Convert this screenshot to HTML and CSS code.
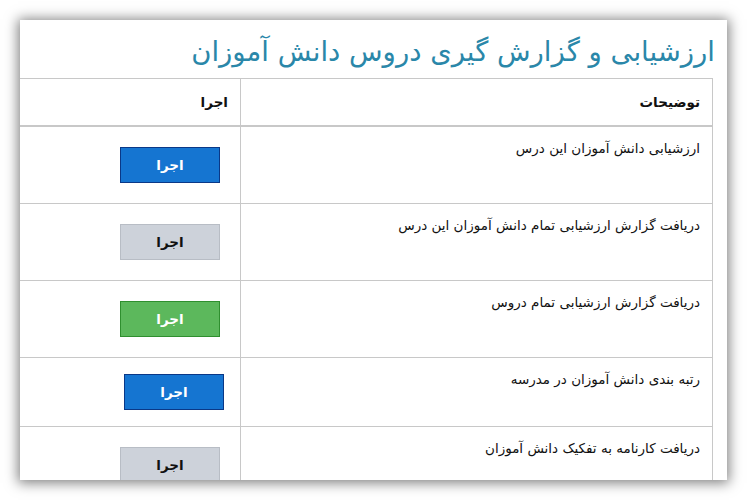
FILE: index.html
```html
<!DOCTYPE html>
<html lang="fa" dir="rtl">
  <head>
    <meta charset="UTF-8" />
    <meta name="viewport" content="width=device-width, initial-scale=1.0" />
    <title>ارزشیابی و گزارش گیری دروس دانش آموزان</title>
    <link rel="stylesheet" href="styles.css">
  </head>
  <body>
    <div class="panel">
      <h1 class="panel-title">ارزشیابی و گزارش گیری دروس دانش آموزان</h1>

      <table class="report-table">
        <thead>
          <tr>
            <th class="col-desc">توضیحات</th>
            <th class="col-action">اجرا</th>
          </tr>
        </thead>
        <tbody>
          <tr>
            <td class="col-desc">ارزشیابی دانش آموزان این درس</td>
            <td class="col-action"><button type="button" class="btn btn-primary">اجرا</button></td>
          </tr>
          <tr>
            <td class="col-desc">دریافت گزارش ارزشیابی تمام دانش آموزان این درس</td>
            <td class="col-action"><button type="button" class="btn btn-default">اجرا</button></td>
          </tr>
          <tr>
            <td class="col-desc">دریافت گزارش ارزشیابی تمام دروس</td>
            <td class="col-action"><button type="button" class="btn btn-success">اجرا</button></td>
          </tr>
          <tr class="row-compact">
            <td class="col-desc">رتبه بندی دانش آموزان در مدرسه</td>
            <td class="col-action"><button type="button" class="btn btn-primary">اجرا</button></td>
          </tr>
          <tr>
            <td class="col-desc">دریافت کارنامه به تفکیک دانش آموزان</td>
            <td class="col-action"><button type="button" class="btn btn-default">اجرا</button></td>
          </tr>
        </tbody>
      </table>
    </div>
  </body>
</html>
```

FILE: styles.css
```css
body {
  font-family: "DejaVu Sans", Tahoma, sans-serif;
  margin: 0;
  padding: 20px;
  background-color: #ffffff;
}
.panel {
  background: white;
  width: 693px;
  height: 460px;
  padding-right: 14px;
  overflow: hidden;
  box-shadow: 0 1px 12px 2px rgba(0, 0, 0, 0.5);
}
.panel-title {
  margin: 0;
  padding: 11px 0 0 0;
  height: 47px;
  margin-right: -2px;
  font-size: 27.5px;
  font-weight: normal;
  color: #2a87a9;
  line-height: 40px;
}
.report-table {
  width: 100%;
  border-collapse: collapse;
  font-size: 13.5px;
  color: #111;
}
.report-table th,
.report-table td {
  border: 1px solid #c8c8c8;
  text-align: right;
  vertical-align: top;
}
.report-table th {
  height: 46px;
  padding: 0 12px;
  vertical-align: middle;
  font-weight: bold;
  border-bottom: 2px solid #c8c8c8;
}
.report-table td {
  height: 77px;
  padding: 13px 12px 0 12px;
  box-sizing: border-box;
}
.report-table .col-desc {
  width: 447px;
}
.report-table td.col-action {
  vertical-align: middle;
  padding: 0 20px 0 0;
}
.report-table tr:last-child td {
  border-bottom: none;
}
.report-table th:last-child,
.report-table td:last-child {
  border-left: none;
}
.row-compact td {
  height: 69px;
}
.row-compact td.col-action {
  padding-right: 16px;
}
.btn {
  width: 100px;
  height: 36px;
  font-family: "DejaVu Sans", Tahoma, sans-serif;
  font-size: 13.5px;
  font-weight: bold;
  cursor: pointer;
  border-radius: 0;
}
.btn-primary {
  background-color: #1575d1;
  border: 1px solid #0a3887;
  color: white;
}
.btn-default {
  background-color: #cdd2da;
  border: 1px solid #b8bdc5;
  color: #111;
}
.btn-success {
  background-color: #5cb85c;
  border: 1px solid #2f8f2f;
  color: white;
}
```
